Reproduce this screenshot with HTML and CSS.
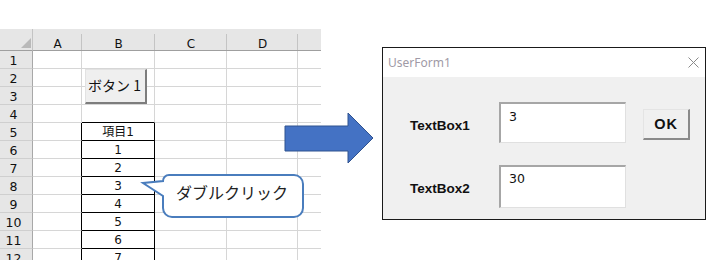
FILE: index.html
```html
<!DOCTYPE html>
<html lang="ja">
<head>
<meta charset="utf-8">
<title>UserForm</title>
<link rel="stylesheet" href="styles.css">
</head>
<body>
<div class="page">
  <div class="sheet">
    <div class="grid">
      <div class="c hd corner"><svg width="33" height="22" viewBox="0 0 33 22"><polygon points="31,9 31,19 21,19" fill="#b9b9b9"/></svg></div>
      <div class="c hd">A</div><div class="c hd">B</div><div class="c hd">C</div><div class="c hd">D</div><div class="c hd last"></div>

      <div class="c rh">1</div><div class="c"></div><div class="c"></div><div class="c"></div><div class="c"></div><div class="c last"></div>
      <div class="c rh">2</div><div class="c"></div><div class="c"></div><div class="c"></div><div class="c"></div><div class="c last"></div>
      <div class="c rh">3</div><div class="c"></div><div class="c"></div><div class="c"></div><div class="c"></div><div class="c last"></div>
      <div class="c rh">4</div><div class="c"></div><div class="c bb"></div><div class="c"></div><div class="c"></div><div class="c last"></div>
      <div class="c rh">5</div><div class="c br"></div><div class="c bk">項目1</div><div class="c"></div><div class="c"></div><div class="c last"></div>
      <div class="c rh">6</div><div class="c br"></div><div class="c bk">1</div><div class="c"></div><div class="c"></div><div class="c last"></div>
      <div class="c rh">7</div><div class="c br"></div><div class="c bk">2</div><div class="c"></div><div class="c"></div><div class="c last"></div>
      <div class="c rh">8</div><div class="c br"></div><div class="c bk">3</div><div class="c"></div><div class="c"></div><div class="c last"></div>
      <div class="c rh">9</div><div class="c br"></div><div class="c bk">4</div><div class="c"></div><div class="c"></div><div class="c last"></div>
      <div class="c rh">10</div><div class="c br"></div><div class="c bk">5</div><div class="c"></div><div class="c"></div><div class="c last"></div>
      <div class="c rh">11</div><div class="c br"></div><div class="c bk">6</div><div class="c"></div><div class="c"></div><div class="c last"></div>
      <div class="c rh">12</div><div class="c br"></div><div class="c bk">7</div><div class="c"></div><div class="c"></div><div class="c last"></div>
    </div>
    <div class="sheet-btn">ボタン 1</div>
  </div>

  <div class="dialog">
    <div class="titlebar">
      <span class="title">UserForm1</span>
      <svg class="close" width="11" height="11" viewBox="0 0 11 11"><path d="M0.5 0.5 L10.5 10.5 M10.5 0.5 L0.5 10.5" stroke="#8a8a8a" stroke-width="1" fill="none"/></svg>
    </div>
    <div class="form">
      <div class="row row1">
        <span class="label">TextBox1</span>
        <div class="tb tb1">3</div>
        <div class="okbtn">OK</div>
      </div>
      <div class="row row2">
        <span class="label">TextBox2</span>
        <div class="tb tb2">30</div>
      </div>
    </div>
  </div>

  <svg class="arrow" width="91" height="54" viewBox="0 0 91 54"><polygon points="1,14 64,14 64,1 89,26 64,51 64,39 1,39" fill="#4472c4" stroke="#2f528f" stroke-width="1"/></svg>

  <div class="callout">
    <svg width="166" height="48" viewBox="0 0 166 48"><path d="M29 3 H154 A9 9 0 0 1 163 12 V36 A9 9 0 0 1 154 45 H32 A9 9 0 0 1 23 36 V24 L3 11 L23 9 A6 6 0 0 1 29 3 Z" fill="#ffffff" stroke="#4a7dbd" stroke-width="2"/></svg>
    <span class="callout-text">ダブルクリック</span>
  </div>
</div>
</body>
</html>
```

FILE: styles.css
```css
* { box-sizing: border-box; }
html, body { margin: 0; padding: 0; background: #ffffff; }
body { width: 715px; height: 260px; overflow: hidden; }

.page {
  position: relative;
  display: flex;
  align-items: flex-start;
  height: 260px;
  overflow: hidden;
}

/* spreadsheet */
.sheet {
  position: relative;
  margin-top: 29px;
  width: 321px;
  flex: none;
}
.grid {
  display: grid;
  grid-template-columns: 33px 49px 73px 72px 71px 23px;
  grid-template-rows: 22px;
  grid-auto-rows: 18px;
  font-family: "DejaVu Sans", "Noto Sans CJK JP", sans-serif;
  font-size: 12px;
  color: #111;
}
.c {
  border-right: 1px solid #d6d6d6;
  border-bottom: 1px solid #d6d6d6;
  text-align: center;
  line-height: 17px;
  padding-top: 1px;
  overflow: hidden;
  white-space: nowrap;
}
.c.last { border-right: none; }
.hd {
  background-color: #e6e6e6;
  border-right: none;
  border-bottom: 1px solid #9f9f9f;
  background-image: linear-gradient(to bottom, transparent 5px, #c4c4c4 5px);
  background-size: 1px 100%;
  background-position: right top;
  background-repeat: no-repeat;
  padding-top: 10px;
  line-height: 11px;
  overflow: visible;
}
.hd.last { background-image: none; }
.hd.corner {
  padding: 0;
  background-image: none;
  border-right: 1px solid #c4c4c4;
}
.hd.corner svg { display: block; }
.rh {
  background: #e6e6e6;
  border-right: 1px solid #a8a8a8;
  border-bottom: 1px solid #cfcfcf;
  text-align: center;
  padding-right: 5px;
  font-size: 12.5px;
}
.bb { border-bottom-color: #000; }
.br { border-right-color: #000; }
.bk {
  border-right-color: #000;
  border-bottom-color: #000;
}

.sheet-btn {
  position: absolute;
  left: 85px;
  top: 40px;
  width: 62px;
  height: 35px;
  background: #efefef;
  border-top: 1px solid #e2e2e2;
  border-left: 1px solid #e2e2e2;
  border-right: 2px solid #7d7d7d;
  border-bottom: 2px solid #7d7d7d;
  font-family: "Noto Sans CJK JP", sans-serif;
  font-size: 14px;
  line-height: 30px;
  color: #111;
  padding-left: 2px;
  white-space: nowrap;
}

/* dialog */
.dialog {
  margin-left: 61px;
  margin-top: 47px;
  width: 324px;
  height: 173px;
  border: 1px solid #1a1a1a;
  background: #f0f0f0;
  flex: none;
  display: flex;
  flex-direction: column;
}
.titlebar {
  height: 29px;
  background: #ffffff;
  display: flex;
  align-items: center;
  justify-content: space-between;
  padding: 0 6px 0 5px;
  flex: none;
}
.title {
  font-family: "Noto Sans", sans-serif;
  font-size: 12px;
  color: #a09aa6;
}
.close { display: block; margin-right: 0; }

.form {
  padding: 25px 0 0 27px;
}
.row {
  display: flex;
  align-items: flex-start;
}
.row2 { margin-top: 22px; }
.label {
  width: 89px;
  flex: none;
  font-family: "Liberation Sans", sans-serif;
  font-weight: bold;
  font-size: 13.5px;
  line-height: 16px;
  color: #111;
  margin-top: 16px;
}
.tb {
  width: 127px;
  background: #ffffff;
  border-top: 2px solid #a6a6a6;
  border-left: 2px solid #a6a6a6;
  border-right: 1px solid #e0e0e0;
  border-bottom: 1px solid #e0e0e0;
  font-family: "DejaVu Sans", sans-serif;
  font-size: 12.5px;
  line-height: 16px;
  color: #111;
  padding: 5px 0 0 8px;
  flex: none;
}
.tb1 { height: 41px; }
.tb2 { height: 43px; padding-top: 4px; }
.okbtn {
  margin-left: 17px;
  margin-top: 7px;
  width: 47px;
  height: 31px;
  background: #f0f0f0;
  border-top: 1px solid #e4e4e4;
  border-left: 1px solid #e4e4e4;
  border-right: 2px solid #8a8a8a;
  border-bottom: 2px solid #8a8a8a;
  font-family: "Liberation Sans", sans-serif;
  font-weight: bold;
  font-size: 14.5px;
  letter-spacing: 1px;
  line-height: 28px;
  text-align: center;
  color: #111;
  flex: none;
}

/* overlays */
.arrow {
  position: absolute;
  left: 284px;
  top: 112px;
  display: block;
}
.callout {
  position: absolute;
  left: 140px;
  top: 172px;
  width: 166px;
  height: 48px;
}
.callout svg { display: block; }
.callout-text {
  position: absolute;
  left: 36px;
  top: 10px;
  font-family: "Noto Sans CJK JP", sans-serif;
  font-size: 16px;
  line-height: 20px;
  color: #222;
  white-space: nowrap;
}
```
